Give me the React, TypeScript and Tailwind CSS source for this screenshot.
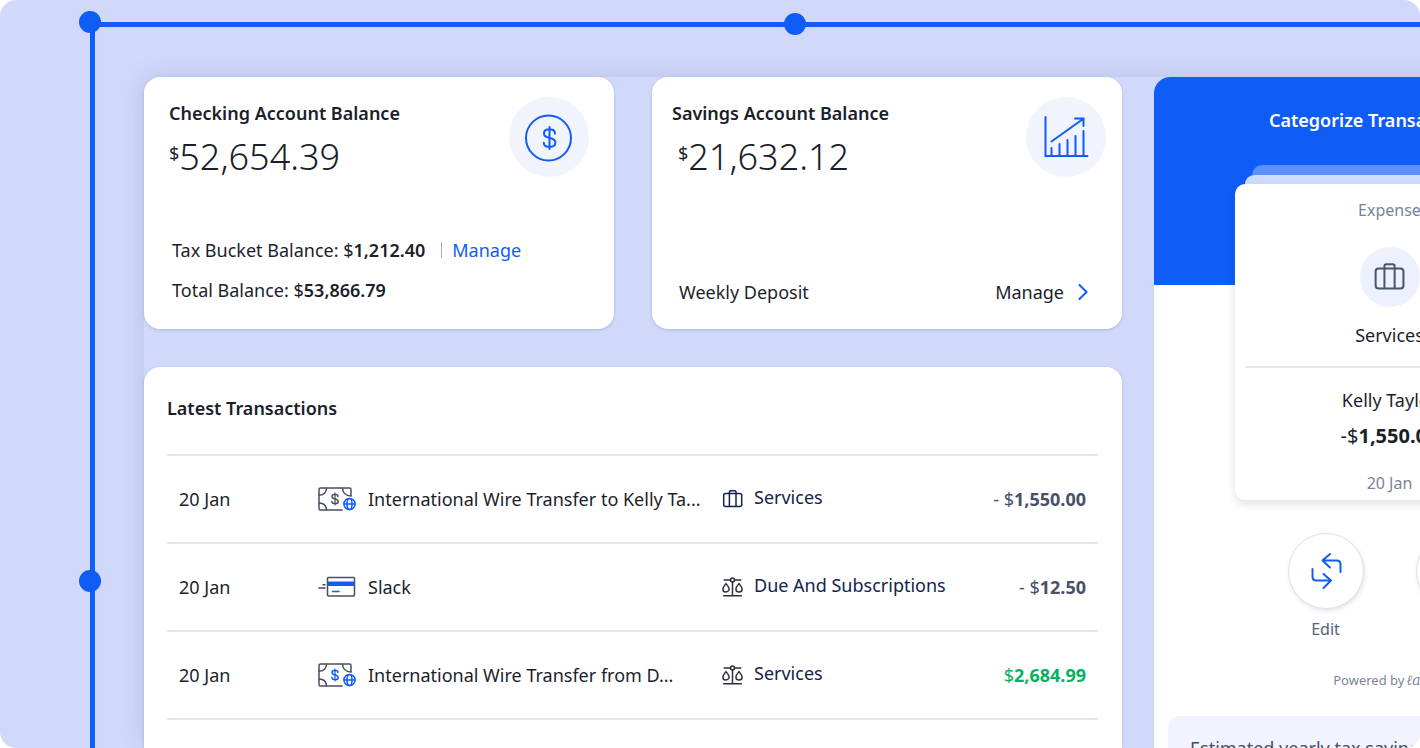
import type { ReactNode } from "react";

type IconName = "services" | "dues";

interface Transaction {
  date: string;
  kind: "wire-out" | "wire-in" | "card";
  description: string;
  category: string;
  icon: IconName;
  sign: string;
  amount: string;
}

const transactions: Transaction[] = [
  {
    date: "20 Jan",
    kind: "wire-out",
    description: "International Wire Transfer to Kelly Ta...",
    category: "Services",
    icon: "services",
    sign: "- $",
    amount: "1,550.00",
  },
  {
    date: "20 Jan",
    kind: "card",
    description: "Slack",
    category: "Due And Subscriptions",
    icon: "dues",
    sign: "- $",
    amount: "12.50",
  },
  {
    date: "20 Jan",
    kind: "wire-in",
    description: "International Wire Transfer from D...",
    category: "Services",
    icon: "dues",
    sign: "$",
    amount: "2,684.99",
  },
];

/* Icons */

function DollarIcon() {
  return (
    <svg viewBox="0 0 80 80" className="w-20 h-20 text-[#0f5cf7]" fill="none" stroke="currentColor" strokeWidth="2" strokeLinecap="round" aria-hidden="true">
      <circle cx="39.5" cy="41" r="22.5" />
      <path d="M40.5 30v22" />
      <path d="M46 36.6c-.2-2.6-1.8-4-4.2-4h-2.6c-2.6 0-4.2 1.6-4.2 4 0 2.9 2 3.7 5.5 4.4 3.6.7 5.9 1.6 5.9 4.6 0 2.5-1.7 4.1-4.3 4.1h-2.9c-2.5 0-4.2-1.4-4.4-3.9" />
    </svg>
  );
}

function GrowthIcon() {
  return (
    <svg viewBox="0 0 80 80" className="w-20 h-20 text-[#0f5cf7]" fill="none" stroke="currentColor" strokeWidth="2" strokeLinecap="round" aria-hidden="true">
      <path d="M19.500 20V59h42" />
      <path d="M25.500 58v-7M33.500 58V47M41.500 58V43M49.500 58V39M57.500 58V34" />
      <path d="M25.500 44.500 57 22M49 21.500h8.500V29" />
    </svg>
  );
}

function BriefcaseIcon({ className, strokeWidth }: { className: string; strokeWidth: number }) {
  return (
    <svg viewBox="0 0 22 22" className={className} fill="none" stroke="currentColor" strokeWidth={strokeWidth} aria-hidden="true">
      <rect x="1.7" y="5.5" width="18" height="13" rx="2" />
      <path d="M7.4 18.500V4a1.200 1.200 0 0 1 1.200-1.200h4.200A1.200 1.200 0 0 1 14 4v14.500" />
    </svg>
  );
}

function ScalesIcon() {
  return (
    <svg viewBox="0 0 22 22" className="w-[22px] h-[22px] text-[#2c303b]" fill="none" stroke="currentColor" strokeWidth="1.5" strokeLinecap="round" aria-hidden="true">
      <circle cx="10.5" cy="4" r="2" />
      <path d="M2.2 4h6.2M12.6 4h6.2M10.5 6v13.2M1.6 19.8h17.8" />
      <path d="M4 7.6c1.6 2 3.1 3.7 3.1 5.3a3.1 3.1 0 0 1-6.2 0c0-1.6 1.5-3.3 3.1-5.3z" />
      <path d="M17 7.6c1.6 2 3.1 3.7 3.1 5.3a3.1 3.1 0 0 1-6.2 0c0-1.6 1.5-3.3 3.1-5.3z" />
    </svg>
  );
}

function WireIcon({ incoming }: { incoming: boolean }) {
  return (
    <svg viewBox="0 0 38 24" className="w-[38px] h-6 text-[#4a4f5c]" fill="none" stroke="currentColor" strokeWidth="1.5" strokeLinecap="round" aria-hidden="true">
      <path d="M24 23H2.5A1.5 1.5 0 0 1 1 21.5V2.5A1.5 1.5 0 0 1 2.5 1h29A1.5 1.5 0 0 1 33 2.5V9" />
      <path d="M8.5 1.2C8.3 5.4 5.5 8 1.2 8.2M24.5 1.2C24.7 5.8 28.2 8.8 32.8 9M1.2 16C5.5 16.2 8.3 18.8 8.5 22.8" />
      <g stroke={incoming ? "#0f5cf7" : "currentColor"}>
        <path d="M17 6v12" strokeWidth="1.2" />
        <path d="M20 9.5c0-1.3-1-2-2.2-2h-1.5c-1.4 0-2.3.8-2.3 2.1 0 1.6 1.2 2 3 2.4s3.2.9 3.2 2.5c0 1.3-1 2.1-2.3 2.1h-1.6c-1.4 0-2.3-.7-2.4-2.1" />
      </g>
      <g stroke="#0f5cf7">
        <circle cx="31.5" cy="17" r="5.6" />
        <ellipse cx="31.5" cy="17" rx="2.5" ry="5.6" />
        <path d="M26 17h11" />
      </g>
    </svg>
  );
}

function CardIcon() {
  return (
    <svg viewBox="0 0 38 24" className="w-[38px] h-6 text-[#4a4f5c]" fill="none" stroke="currentColor" strokeWidth="1.5" strokeLinecap="round" aria-hidden="true">
      <path d="M9.5 6.500h27v4.500h-27z" fill="#0f5cf7" stroke="none" />
      <rect x="9.5" y="2.5" width="27" height="18.5" rx="1" />
      <path d="M14.5 16.5h6.5" stroke="#0f5cf7" />
      <path d="M5 9.8h2M.9 13H7" />
    </svg>
  );
}

function SwapIcon() {
  return (
    <svg viewBox="0 0 32 38" className="w-8 h-[38px] text-[#0f5cf7]" fill="none" stroke="currentColor" strokeWidth="2" strokeLinecap="round" strokeLinejoin="round" aria-hidden="true">
      <path d="M30.500 20v-7.500q0-4-4-4H12.500M20 2l-7.500 6.500 7.500 7" />
      <path d="M2.500 17v7.500q0 4 4 4h14.500M13.500 22l7.500 6.500-7.500 7.500" />
    </svg>
  );
}

/* Pieces */

function Card({ children }: { children: ReactNode }) {
  return (
    <section className="flex flex-col justify-between h-[252px] bg-white rounded-2xl pt-5 shadow-[0_1px_3px_rgba(70,80,130,0.25)]">
      {children}
    </section>
  );
}

function Amount({ value }: { value: string }) {
  return (
    <p className="flex items-start mt-2">
      <span className="text-lg leading-10">$</span>
      <span className="text-4xl leading-[48px] font-light">{value}</span>
    </p>
  );
}

function IconDisc({ children }: { children: ReactNode }) {
  return <div className="w-20 h-20 shrink-0 rounded-full bg-[#f1f4fd]">{children}</div>;
}

function Dot({ className }: { className: string }) {
  return <span className={`absolute w-[22px] h-[22px] rounded-full bg-[#0f5cf7] ${className}`} />;
}

function CheckingCard() {
  return (
    <Card>
      <div className="flex justify-between px-[25px]">
        <div className="pt-1">
          <h2 className="font-semibold">Checking Account Balance</h2>
          <Amount value="52,654.39" />
        </div>
        <IconDisc>
          <DollarIcon />
        </IconDisc>
      </div>
      <div className="flex flex-col gap-4 px-7 pb-[27px]">
        <div className="flex items-center">
          <p>
            Tax Bucket Balance: $<b className="font-semibold">1,212.40</b>
          </p>
          <a href="#tax-bucket" className="flex items-center ml-4 text-[#0f5cf7]">
            <span className="w-px h-4 mr-2.5 bg-[#a3adc9]" />
            Manage
          </a>
        </div>
        <p>
          Total Balance: $<b className="font-semibold">53,866.79</b>
        </p>
      </div>
    </Card>
  );
}

function SavingsCard() {
  return (
    <Card>
      <div className="flex justify-between pl-5 pr-4">
        <div className="pt-1">
          <h2 className="font-semibold">Savings Account Balance</h2>
          <div className="pl-1.5">
            <Amount value="21,632.12" />
          </div>
        </div>
        <IconDisc>
          <GrowthIcon />
        </IconDisc>
      </div>
      <div className="flex justify-between pl-[27px] pr-[34px] pb-[25px]">
        <p>Weekly Deposit</p>
        <a href="#weekly-deposit" className="flex items-center gap-3.5">
          Manage
          <svg viewBox="0 0 10 16" className="w-2.5 h-4" fill="none" stroke="#0f5cf7" strokeWidth="2" strokeLinecap="round" aria-hidden="true">
            <path d="m1.500 1 7 7-7 7" />
          </svg>
        </a>
      </div>
    </Card>
  );
}

function TransactionRow({ tx }: { tx: Transaction }) {
  return (
    <tr className="h-[88px] border-t-2 border-[#e5e7f0]">
      <td className="pl-3">{tx.date}</td>
      <td>
        <div className="flex items-center gap-3 whitespace-nowrap">
          {tx.kind === "card" ? <CardIcon /> : <WireIcon incoming={tx.kind === "wire-in"} />}
          {tx.description}
        </div>
      </td>
      <td>
        <div className="flex items-center gap-2.5 whitespace-nowrap text-[#12244d]">
          {tx.icon === "services" ? <BriefcaseIcon className="w-[22px] h-[22px]" strokeWidth={1.5} /> : <ScalesIcon />}
          <span className="pb-1">{tx.category}</span>
        </div>
      </td>
      <td className={`pr-3 text-right ${tx.sign === "$" ? "text-[#06b15f]" : "text-[#475068]"}`}>
        {tx.sign}
        <b>{tx.amount}</b>
      </td>
    </tr>
  );
}

function LatestTransactions() {
  return (
    <section className="grow bg-white rounded-t-2xl pl-[23px] pr-6 pt-[29px] shadow-[0_1px_3px_rgba(70,80,130,0.25)]">
      <h2 className="font-semibold mb-[34px]">Latest Transactions</h2>
      <table className="w-full table-fixed border-collapse">
        <colgroup>
          <col className="w-[151px]" />
          <col className="w-[404px]" />
          <col className="w-[240px]" />
          <col />
        </colgroup>
        <tbody className="border-b-2 border-[#e5e7f0]">
          {transactions.map((tx, i) => (
            <TransactionRow key={i} tx={tx} />
          ))}
        </tbody>
      </table>
    </section>
  );
}

function RoundAction({ label, children }: { label: string; children: ReactNode }) {
  return (
    <button type="button" className="flex flex-col items-center w-[76px] gap-2 text-base text-[#55617a]">
      <span className="flex items-center justify-center w-[76px] h-[76px] rounded-full border border-[#dfe1ec] bg-white shadow-[1px_2px_4px_rgba(60,70,110,0.15)]">
        {children}
      </span>
      {label}
    </button>
  );
}

function CategorizePanel() {
  return (
    <section className="relative overflow-hidden bg-white rounded-t-2xl">
      <div className="absolute inset-x-0 top-0 h-[208px] bg-[#0f5cf7]" />
      <div className="relative pt-[31px]">
        <h2 className="pl-[115px] font-semibold text-white">Categorize Transactions</h2>

        {/* stacked cards behind the current transaction */}
        <div className="mt-[33px] mx-[98px] h-2.5 rounded-t-[10px] bg-[#5a90fa]" />
        <div className="mx-[91px] h-[9px] rounded-t-[9px] bg-[#cddcfd]" />
        <div className="flex flex-col items-center mx-[81px] pt-3.5 pb-[5px] rounded-[10px] bg-white shadow-[0_4px_10px_rgba(40,50,80,0.14)]">
          <p className="text-base text-[#7a8499]">Expense</p>
          <div className="flex items-center justify-center w-[60px] h-[60px] mt-[25px] rounded-full bg-[#edf1fe] text-[#4b5469]">
            <BriefcaseIcon className="w-[34px] h-[34px]" strokeWidth={1.3} />
          </div>
          <p className="mt-4">Services</p>
          <hr className="self-stretch mx-2.5 mt-[19px] mb-5 border-t-2 border-[#e5e7f0]" />
          <p>Kelly Taylor</p>
          <p className="mt-2.5 text-xl leading-7">
            -$<b>1,550.00</b>
          </p>
          <p className="mt-[21px] text-base text-[#7a8499]">20 Jan</p>
        </div>

        <div className="flex justify-center gap-[52px] mt-[33px]">
          <RoundAction label="Edit">
            <SwapIcon />
          </RoundAction>
          <RoundAction label="Confirm">
            <svg viewBox="0 0 32 32" className="w-8 h-8" fill="none" stroke="#0f5cf7" strokeWidth="2" strokeLinecap="round" aria-hidden="true">
              <path d="m6 17 7 7L27 9" />
            </svg>
          </RoundAction>
        </div>

        <p className="flex items-center justify-center gap-0.5 h-6 mt-[27px] text-[13px] text-[#7a8499]">
          Powered by
          <span className="font-['DejaVu_Serif'] italic text-sm">ℓance</span>
        </p>

        <div className="mx-3.5 mt-6 px-[22px] py-5 rounded-xl bg-[#f1f4fd] text-[#475068]">Estimated yearly tax savings</div>
      </div>
    </section>
  );
}

export default function App() {
  return (
    <main className="relative h-screen overflow-hidden rounded-2xl bg-[#d0d9fa] font-['Noto_Sans',sans-serif] text-lg leading-6 text-[#1b1f2b]">
      {/* selection frame with its handles */}
      <div className="absolute left-[90px] top-[22px] right-0 bottom-0 border-l-[5px] border-t-[5px] border-[#0f5cf7]" aria-hidden="true" />
      <Dot className="left-[79px] top-[11px]" />
      <Dot className="left-[56%] -translate-x-1/2 top-[13px]" />
      <Dot className="left-[79px] top-[570px]" />

      {/* the board runs past the right edge of the window */}
      <div className="relative h-full pl-36 pt-[77px] -mr-[205px]">
        <div className="grid grid-cols-[minmax(0,1fr)_471px] gap-8 h-full rounded-2xl bg-[#d0d9fa] shadow-[0_0_24px_rgba(100,110,150,0.22)]">
          <div className="flex flex-col gap-[38px]">
            <div className="grid grid-cols-2 gap-[38px]">
              <CheckingCard />
              <SavingsCard />
            </div>
            <LatestTransactions />
          </div>
          <CategorizePanel />
        </div>
      </div>
    </main>
  );
}
